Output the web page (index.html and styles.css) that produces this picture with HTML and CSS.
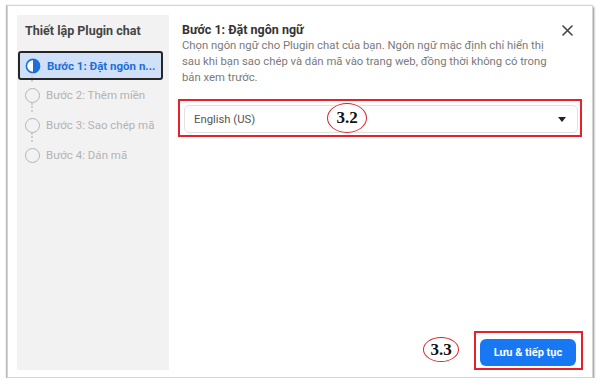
FILE: index.html
```html
<!DOCTYPE html>
<html lang="vi">
<head>
<meta charset="utf-8">
<title>Thiết lập Plugin chat</title>
<link rel="stylesheet" href="styles.css">
</head>
<body>
<div class="frame">
  <aside class="sidebar">
    <div class="side-title">Thiết lập Plugin chat</div>
    <ul class="steps">
      <li class="step active">
        <svg class="ico" width="16" height="16" viewBox="0 0 16 16"><circle cx="8" cy="8" r="6.6" fill="#fff" stroke="#1b6fd8" stroke-width="1.6"/><path d="M8 1.4 A6.6 6.6 0 0 1 8 14.6 Z" fill="#1b6fd8"/></svg>
        <span class="label">Bước 1: Đặt ngôn n...</span>
      </li>
      <li class="step">
        <span class="ring"></span><span class="label">Bước 2: Thêm miền</span>
      </li>
      <li class="step">
        <span class="ring"></span><span class="label">Bước 3: Sao chép mã</span>
      </li>
      <li class="step">
        <span class="ring"></span><span class="label">Bước 4: Dán mã</span>
      </li>
    </ul>
  </aside>
  <main class="main">
    <div class="head">
      <div class="title">Bước 1: Đặt ngôn ngữ</div>
      <svg class="close" width="11" height="11" viewBox="0 0 11 11"><path d="M1 1 L10 10 M10 1 L1 10" stroke="#444" stroke-width="1.6" stroke-linecap="round"/></svg>
    </div>
    <p class="desc">Chọn ngôn ngữ cho Plugin chat của bạn. Ngôn ngữ mặc định chỉ hiển thị sau khi bạn sao chép và dán mã vào trang web, đồng thời không có trong bản xem trước.</p>
    <div class="mark mark-select">
      <div class="select">
        <span>English (US)</span>
        <span class="caret"></span>
      </div>
    </div>
    <div class="footer">
      <div class="mark mark-btn">
        <button class="btn">Lưu &amp; tiếp tục</button>
      </div>
    </div>
  </main>
  <div class="note note-32">3.2</div>
  <div class="note note-33">3.3</div>
</div>
</body>
</html>
```

FILE: styles.css
```css
* { box-sizing: border-box; }
html, body { margin: 0; padding: 0; background: #fff; }
body { font-family: Roboto, "Liberation Sans", Arial, sans-serif; }

.frame {
  position: relative;
  margin: 5px 0 0 7px;
  width: 586px;
  height: 373px;
  border: 1px solid #d4d4d4;
  box-shadow: 1px 2px 2px rgba(0,0,0,0.45), -1px 0 1px rgba(0,0,0,0.25);
  background: #fff;
  display: flex;
  padding: 9px 0 7px 9px;
}

.sidebar {
  width: 152px;
  flex: none;
  background: #f2f2f2;
  padding: 8px 0 0 1px;
}
.side-title {
  font-size: 12.5px;
  font-weight: 700;
  line-height: 16px;
  color: #454545;
  padding-left: 7px;
  margin-bottom: 12px;
}
.steps { list-style: none; margin: 0; padding: 0; width: 145px; }
.step {
  position: relative;
  height: 30px;
  display: flex;
  align-items: center;
  padding-left: 7px;
  gap: 6px;
  font-size: 11.5px;
  color: #b3b3b3;
}
.step.active {
  height: 29px;
  border: 2px solid #262626;
  border-radius: 3px;
  background: #cfe0f8;
  padding-left: 5px;
  color: #1b6fd8;
  font-weight: 700;
}
.step:not(.active)::before {
  content: "";
  position: absolute;
  left: 13px;
  top: -7px;
  height: 9px;
  border-left: 2px dotted #cfcfcf;
}
.ico { flex: none; }
.ring {
  flex: none;
  width: 15px;
  height: 15px;
  border: 1.5px solid #b5b5b5;
  border-radius: 50%;
}
.label { white-space: nowrap; }

.main {
  flex: 1;
  display: flex;
  flex-direction: column;
  padding: 7px 10px 0 9px;
}
.head {
  display: flex;
  align-items: center;
  justify-content: space-between;
  padding: 0 9px 0 4px;
}
.title {
  font-size: 12.5px;
  font-weight: 700;
  line-height: 16px;
  color: #333;
}
.desc {
  margin: 0;
  padding-left: 4px;
  width: 374px;
  font-size: 11.3px;
  line-height: 16px;
  color: #7a7a7a;
}
.mark { border: 2px solid #e8202a; }
.mark-select {
  margin-top: 13px;
  padding: 4px 2px 2px 4px;
}
.select {
  height: 28px;
  border: 1px solid #e2e2e2;
  border-radius: 5px;
  display: flex;
  align-items: center;
  justify-content: space-between;
  padding: 0 11px 0 9px;
  font-size: 11.3px;
  color: #555;
}
.caret {
  width: 0; height: 0;
  border-left: 4.5px solid transparent;
  border-right: 4.5px solid transparent;
  border-top: 5px solid #222;
}
.footer {
  margin-top: auto;
  display: flex;
  justify-content: flex-end;
  margin-right: -1px;
}
.mark-btn { padding: 6px 5px 2px 4px; }
.btn {
  display: block;
  width: 96px;
  height: 27px;
  border: 0;
  border-radius: 6px;
  background: #1877f2;
  color: #fff;
  font-family: Roboto, "Liberation Sans", Arial, sans-serif;
  font-size: 11px;
  font-weight: 700;
  padding: 0;
}

.note {
  position: absolute;
  border: 1.5px solid #d8262c;
  border-radius: 50%;
  background: #fff;
  font-family: "Liberation Serif", "Times New Roman", serif;
  font-weight: 700;
  font-size: 17px;
  color: #111;
  display: flex;
  align-items: center;
  justify-content: center;
}
.note-32 { left: 319px; top: 97px; width: 40px; height: 30px; }
.note-33 { left: 415px; top: 331px; width: 36px; height: 25px; }
```
